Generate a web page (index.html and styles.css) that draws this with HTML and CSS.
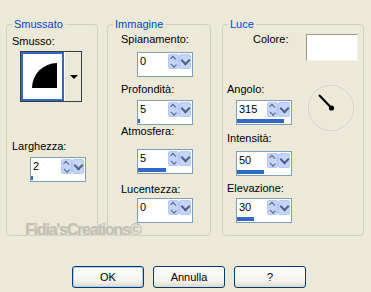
FILE: index.html
```html
<!DOCTYPE html>
<html lang="it">
<head>
    <meta charset="UTF-8">
    <title>Smussatura interna</title>
    <link rel="stylesheet" href="styles.css">
</head>
<body>

<div class="dialog">
    <div class="panels">

        <fieldset class="group group-smussato">
            <legend>Smussato</legend>
            <div class="label lbl-smusso">Smusso:</div>
            <div class="combo">
                <div class="combo-preview"><div class="bevel-shape"></div></div>
                <div class="combo-drop"><span class="tri"></span></div>
            </div>
            <div class="label lbl-larghezza">Larghezza:</div>
            <div class="spin spin-larghezza">
                <div class="spin-top"><span class="val">2</span><span class="arrows"></span><span class="drop"></span></div>
                <div class="track"><div class="fill" style="width:4%"></div></div>
            </div>
        </fieldset>

        <fieldset class="group group-immagine">
            <legend>Immagine</legend>
            <div class="label im-lbl lbl-spianamento">Spianamento:</div>
            <div class="spin im-spin spin-spianamento">
                <div class="spin-top"><span class="val">0</span><span class="arrows"></span><span class="drop"></span></div>
                <div class="track"><div class="fill" style="width:0%"></div></div>
            </div>
            <div class="label im-lbl lbl-profondita">Profondità:</div>
            <div class="spin im-spin spin-profondita">
                <div class="spin-top"><span class="val">5</span><span class="arrows"></span><span class="drop"></span></div>
                <div class="track"><div class="fill" style="width:4%"></div></div>
            </div>
            <div class="label im-lbl lbl-atmosfera">Atmosfera:</div>
            <div class="spin im-spin spin-atmosfera">
                <div class="spin-top"><span class="val">5</span><span class="arrows"></span><span class="drop"></span></div>
                <div class="track"><div class="fill" style="width:52%"></div></div>
            </div>
            <div class="label im-lbl lbl-lucentezza">Lucentezza:</div>
            <div class="spin im-spin spin-lucentezza">
                <div class="spin-top"><span class="val">0</span><span class="arrows"></span><span class="drop"></span></div>
                <div class="track"><div class="fill" style="width:0%"></div></div>
            </div>
        </fieldset>

        <fieldset class="group group-luce">
            <legend>Luce</legend>
            <div class="colore-row">
                <div class="label">Colore:</div>
                <div class="swatch"></div>
            </div>
            <div class="angolo-row">
                <div>
                    <div class="label lc-lbl">Angolo:</div>
                    <div class="spin lc-spin spin-angolo">
                        <div class="spin-top"><span class="val">315</span><span class="arrows"></span><span class="drop"></span></div>
                        <div class="track"><div class="fill" style="width:87%"></div></div>
                    </div>
                </div>
                <svg class="dial" width="48" height="48" viewBox="0 0 48 48">
                    <circle cx="24" cy="24" r="23.5" fill="none" stroke="#fbfbf8" stroke-width="1"/>
                    <circle cx="24" cy="24" r="23" fill="none" stroke="#d3cfc1" stroke-width="1"/>
                    <line x1="12" y1="11" x2="24.5" y2="24" stroke="#000" stroke-width="2"/>
                    <circle cx="24.5" cy="24" r="2.6" fill="#000"/>
                </svg>
            </div>
            <div class="label lc-lbl lbl-intensita">Intensità:</div>
            <div class="spin lc-spin spin-intensita">
                <div class="spin-top"><span class="val">50</span><span class="arrows"></span><span class="drop"></span></div>
                <div class="track"><div class="fill" style="width:50%"></div></div>
            </div>
            <div class="label lc-lbl lbl-elevazione">Elevazione:</div>
            <div class="spin lc-spin spin-elevazione">
                <div class="spin-top"><span class="val">30</span><span class="arrows"></span><span class="drop"></span></div>
                <div class="track"><div class="fill" style="width:32%"></div></div>
            </div>
        </fieldset>

    </div>

    <div class="watermark">Fidia'sCreations©</div>

    <div class="buttons">
        <button class="btn btn-default">OK</button>
        <button class="btn">Annulla</button>
        <button class="btn">?</button>
    </div>
</div>

</body>
</html>
```

FILE: styles.css
```css
*{
    box-sizing: border-box;
}

body{
    margin: 0;
    background: #ece9d8;
    font-family: "Liberation Sans", Arial, sans-serif;
    font-size: 11px;
    color: #000;
}

.dialog{
    position: relative;
    width: 371px;
    height: 292px;
    padding-top: 18px;
}

.panels{
    display: flex;
    align-items: flex-start;
    padding-left: 6px;
}

/* group boxes */
.group{
    margin: 0;
    padding: 0;
    min-width: 0;
    height: 218px;
    border: 1px solid #d0d0bf;
    border-radius: 4px;
}
.group legend{
    margin-left: 5px;
    padding: 0 2px;
    color: #0046d5;
    line-height: 12px;
}
.group-smussato{
    width: 92px;
}
.group-immagine{
    width: 104px;
    margin-left: 9px;
}
.group-luce{
    width: 142px;
    margin-left: 11px;
}

.label{
    line-height: 12px;
    white-space: nowrap;
}

/* Smussato */
.lbl-smusso{
    margin: 5px 0 0 5px;
}
.combo{
    display: flex;
    width: 62px;
    height: 51px;
    margin: 4px 0 0 13px;
    border: 1px solid #3c3c3c;
}
.combo-preview{
    display: flex;
    align-items: center;
    justify-content: center;
    width: 43px;
    border: 2px solid #316ac5;
    background: #fff;
    padding: 0 0 2px 3px;
}
.bevel-shape{
    width: 25px;
    height: 25px;
    background: #000;
    border-top-left-radius: 100%;
}
.combo-drop{
    flex: 1;
    display: flex;
    align-items: center;
    justify-content: center;
    border-left: 1px solid #fff;
    background: #ece9d8;
}
.tri{
    width: 0;
    height: 0;
    border-left: 4px solid transparent;
    border-right: 4px solid transparent;
    border-top: 4px solid #000;
    margin-left: 1px;
}
.lbl-larghezza{
    margin: 38px 0 0 5px;
}
.spin-larghezza{
    margin: 5px 0 0 23px;
}

/* spin boxes */
.spin{
    width: 56px;
    height: 25px;
    border: 1px solid #7f9db9;
    background: #fff;
}
.spin-top{
    display: flex;
    height: 17px;
}
.val{
    flex: 1;
    padding-left: 2px;
    line-height: 17px;
}
.arrows,
.drop{
    display: flex;
    flex-direction: column;
    align-items: center;
    justify-content: center;
    height: 15px;
    margin-top: 1px;
    background: #c5d5fa;
    border: 1px solid #b4c8f6;
    border-radius: 2px;
}
.arrows{
    width: 11px;
    gap: 2px;
}
.drop{
    width: 12px;
    margin-right: 1px;
}
.arrows::before,
.arrows::after,
.drop::before{
    content: '';
    width: 4px;
    height: 4px;
    border-top: 1.5px solid #4d6185;
    border-left: 1.5px solid #4d6185;
}
.arrows::before{
    transform: rotate(45deg);
    margin-top: 2px;
}
.arrows::after{
    transform: rotate(225deg);
    margin-bottom: 2px;
}
.drop::before{
    width: 5px;
    height: 5px;
    border-width: 2px;
    transform: rotate(225deg);
    margin-top: -2px;
}
.track{
    height: 6px;
    padding-top: 1px;
    background: #fff;
}
.fill{
    height: 4px;
    background: #316ac5;
}

/* Immagine */
.im-lbl{
    margin-left: 13px;
}
.im-spin{
    margin-left: 29px;
}
.lbl-spianamento{ margin-top: 3px; }
.spin-spianamento{ margin-top: 7px; }
.lbl-profondita{ margin-top: 6px; }
.spin-profondita{ margin-top: 5px; }
.lbl-atmosfera{ margin-top: 0; }
.spin-atmosfera{ margin-top: 12px; }
.lbl-lucentezza{ margin-top: 9px; }
.spin-lucentezza{ margin-top: 3px; }

/* Luce */
.colore-row{
    display: flex;
    margin-top: 3px;
}
.colore-row .label{
    margin-left: 30px;
}
.swatch{
    width: 52px;
    height: 27px;
    margin: 1px 5px 0 auto;
    background: #fff;
    border: 1px solid;
    border-color: #9d9a8e #f4f3ee #f4f3ee #9d9a8e;
}
.angolo-row{
    display: flex;
    margin-top: 22px;
}
.lc-lbl{
    margin-left: 4px;
}
.lc-spin{
    margin-left: 13px;
}
.spin-angolo{ margin-top: 5px; }
.dial{
    display: block;
    margin: 1px 8px 0 auto;
}
.lbl-intensita{ margin-top: 0; }
.spin-intensita{ margin-top: 7px; }
.lbl-elevazione{ margin-top: 6px; }
.spin-elevazione{ margin-top: 4px; }

.watermark{
    position: absolute;
    left: 25px;
    top: 221px;
    font-size: 16px;
    font-weight: bold;
    line-height: 18px;
    letter-spacing: -1.2px;
    color: #c3bfb3;
    text-shadow: 1px 1px 0 #dcd9ce;
}

/* buttons */
.buttons{
    display: flex;
    gap: 9px;
    padding-left: 72px;
    margin-top: 30px;
}
.btn{
    width: 72px;
    height: 22px;
    padding: 0;
    font-family: "Liberation Sans", Arial, sans-serif;
    font-size: 11px;
    color: #000;
    border: 1px solid #003c74;
    border-radius: 3px;
    background: linear-gradient(#ffffff, #f3f2ec 70%, #dcd8cc);
}
.btn-default{
    box-shadow: inset 0 0 0 1px #b4cdf2;
}
```
